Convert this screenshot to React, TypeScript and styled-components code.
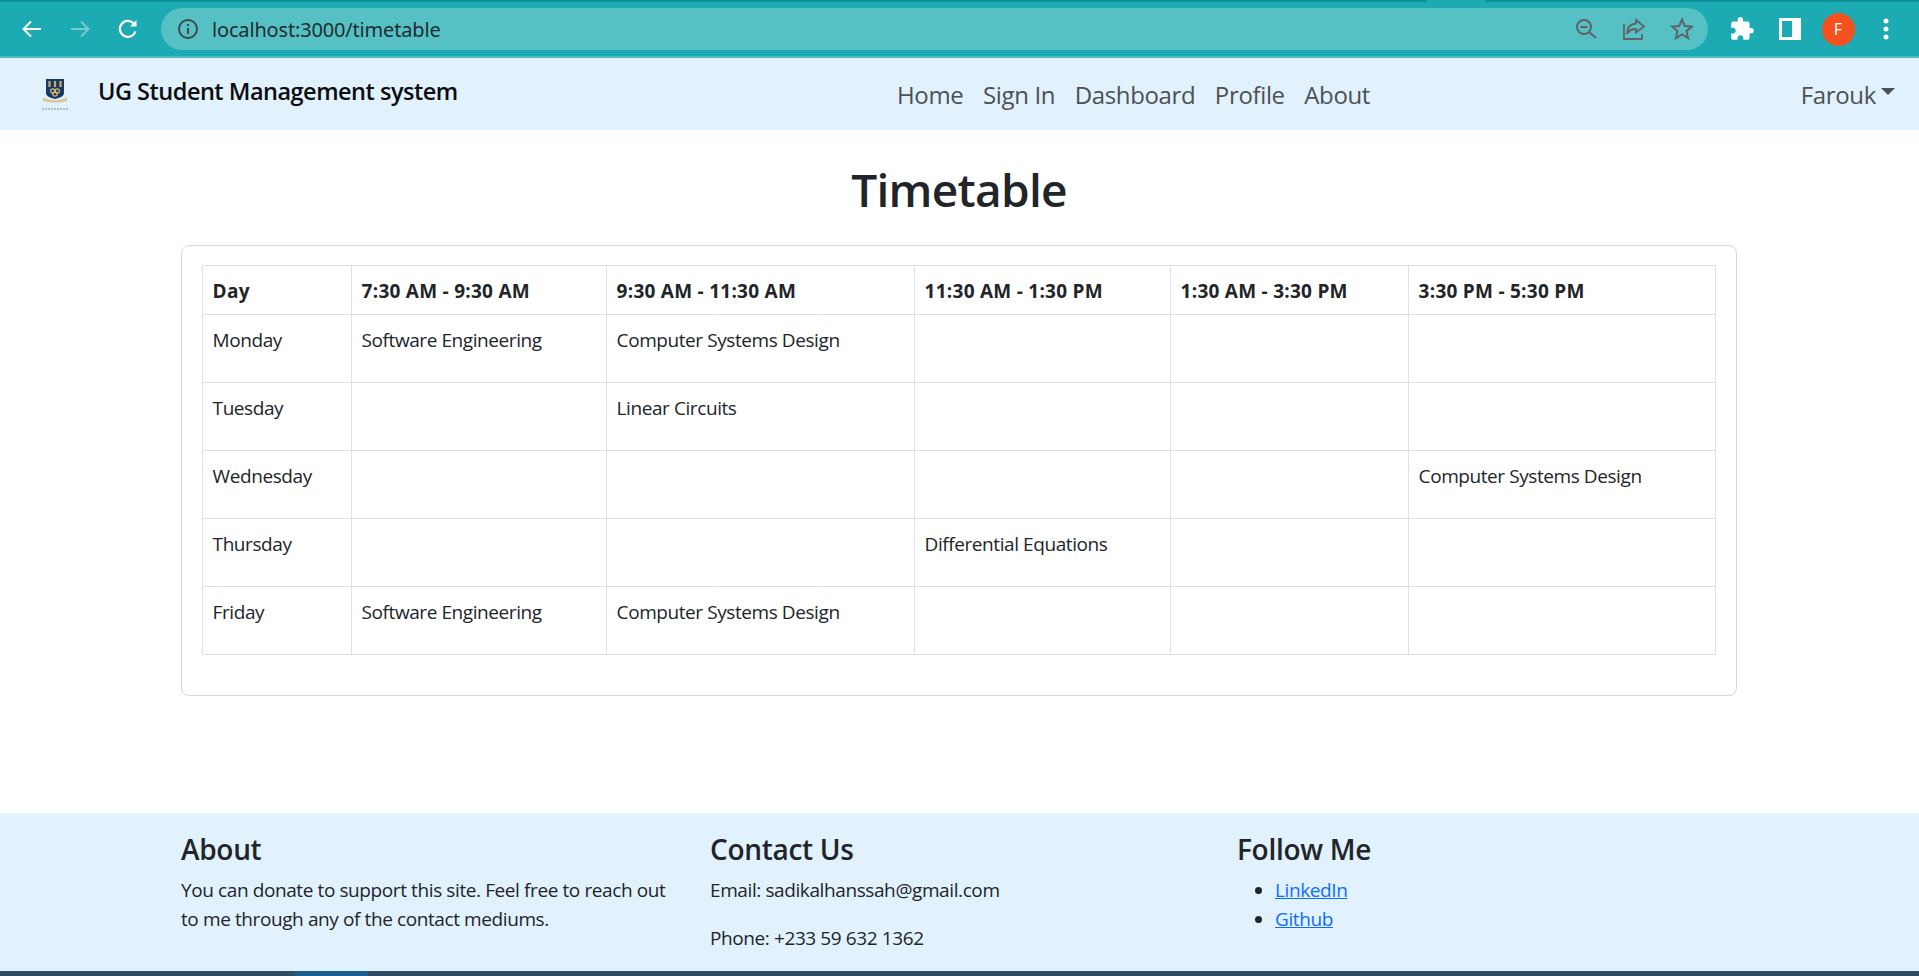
import React from "react";
import styled, { createGlobalStyle } from "styled-components";

const Global = createGlobalStyle`
  html, body { margin: 0; padding: 0; background: #fff; }
  body { font-family: "Open Sans", "Noto Sans", "Liberation Sans", sans-serif; color: #212529; overflow: hidden; }
  * { box-sizing: border-box; }
`;
const Page = styled.div`height: 976px; display: flex; flex-direction: column; overflow: hidden;`;
const Chrome = styled.div`
  position: relative; height: 58px; flex: none; background: #1cabb2; border-top: 2px solid #0b9097; border-bottom: 2px solid #4dbcc2;
  display: flex; align-items: center; padding: 0 0 0 16px;
`;
const TabNotch = styled.span`position: absolute; top: -2px; left: 1427px; width: 58px; height: 2px; background: #1cabb2;`;
const ChromeBtn = styled.button<{ $faded?: boolean }>`
  width: 32px; height: 32px; margin-right: 16px; padding: 0; border: 0; background: none;
  display: flex; align-items: center; justify-content: center; color: #fff; opacity: ${p => p.$faded ? 0.4 : 1};
`;
const Omnibox = styled.div`
  width: 1547px; height: 42px; margin-left: 1px; border-radius: 21px; background: #55c1c5;
  display: flex; align-items: center; padding: 0 2px 0 16px;
`;
const Url = styled.span`
  margin-left: 13px; font-family: "Noto Sans", sans-serif; font-size: 20px; color: #202d30; flex: 1; letter-spacing: -.17px;
`;
const OmniIcon = styled.span`width: 48px; display: flex; justify-content: center; color: #5f6368;`;
const Tools = styled.div`display: flex; align-items: center; margin-left: 10px;`;
const ToolSlot = styled.span`width: 48px; display: flex; justify-content: center; align-items: center; color: #fff;`;
const Avatar = styled.span`
  width: 33px; height: 33px; border-radius: 50%; background: #f5511e; color: #fff;
  display: flex; align-items: center; justify-content: center; font-size: 16px; font-family: "Noto Sans", sans-serif;
`;
const Nav = styled.nav`
  height: 72px; flex: none; background: #e1f1fd; display: grid; grid-template-columns: 856px auto 1fr;
  align-items: center; padding: 0 24px 0 41px;
`;
const Brand = styled.div`display: flex; align-items: center; gap: 29px;`;
const BrandName = styled.span`font-size: 23.5px; font-weight: 600; color: #0b0d0f; letter-spacing: -.5px; white-space: nowrap; margin-top: -6px;`;
const NavLinks = styled.div`display: flex; gap: 19.5px;`;
const NavLink = styled.a`font-size: 24px; color: #4d5154; letter-spacing: -.35px;`;
const User = styled.div`justify-self: end; display: flex; align-items: center; font-size: 24px; color: #4d5154; letter-spacing: -.35px;`;
const Caret = styled.span`
  width: 0; height: 0; margin-left: 5px; margin-bottom: 6px;
  border-left: 7px solid transparent; border-right: 7px solid transparent; border-top: 7px solid #4d5154;
`;
const Main = styled.main`flex: 1; padding: 0 182px 0 181px; min-height: 0;`;
const Title = styled.h1`
  margin: 26px 0 23px; height: 66px; line-height: 66px; text-align: center; font-size: 46px; font-weight: 600; letter-spacing: -.7px;
`;
const Card = styled.section`
  height: 451px; border: 1px solid #d5d8db; border-radius: 8px; padding: 19px 20px 0;
`;
const Table = styled.table`
  width: 100%; border-collapse: collapse; table-layout: fixed; font-size: 19px; letter-spacing: -.42px;
  th, td { border: 1px solid #dee2e6; padding: 12px 9.6px 0; text-align: left; vertical-align: top; }
  th { height: 49px; font-weight: 700; letter-spacing: .26px; }
  td { height: 68px; }
`;
const Footer = styled.footer`
  height: 158px; flex: none; background: #e1f1fd; padding: 20px 181px 0;
  display: grid; grid-template-columns: 529px 527px 1fr; font-size: 19px; letter-spacing: -.4px;
`;
const FootTitle = styled.h4`margin: 0 0 10px; font-size: 28px; line-height: 33px; font-weight: 600; letter-spacing: -.3px;`;
const FootText = styled.p`margin: 0 0 19px; line-height: 29px; width: 500px;`;
const FootList = styled.ul`margin: 0; padding-left: 38px; line-height: 29px;`;
const FootLink = styled.a`color: #0d6efd; text-decoration: underline;`;
const Taskbar = styled.div`height: 5px; flex: none; background: #2f4d63; display: flex;`;
const TaskActive = styled.span`width: 73px; margin-left: 295px; background: #1b5e93;`;

const Crest = () => (
  <svg width="28" height="33" viewBox="0 0 28 33" aria-hidden="true">
    <path d="M5 1h18v14c0 3-4 5-9 6-5-1-9-3-9-6z" fill="#17386b" />
    <path d="M8.500 3v6M14 3v6M19.500 3v6" stroke="#c9ad66" strokeWidth="2.2" />
    <circle cx="11.800" cy="13" r="2.200" fill="none" stroke="#dfb95f" strokeWidth="1.200" />
    <circle cx="16.200" cy="13" r="2.200" fill="none" stroke="#dfb95f" strokeWidth="1.200" />
    <circle cx="14" cy="16" r="2.200" fill="none" stroke="#dfb95f" strokeWidth="1.200" />
    <path d="M2 19c4 4 20 4 24 0v4c-6 2-18 2-24 0z" fill="#dcc592" />
    <path d="M1 31h26" stroke="#7b88a8" strokeWidth="1" strokeDasharray="2 1" />
  </svg>
);

const hours = ["Day", "7:30 AM - 9:30 AM", "9:30 AM - 11:30 AM", "11:30 AM - 1:30 PM", "1:30 AM - 3:30 PM", "3:30 PM - 5:30 PM"];
const rows = [
  ["Monday", "Software Engineering", "Computer Systems Design", "", "", ""],
  ["Tuesday", "", "Linear Circuits", "", "", ""],
  ["Wednesday", "", "", "", "", "Computer Systems Design"],
  ["Thursday", "", "", "Differential Equations", "", ""],
  ["Friday", "Software Engineering", "Computer Systems Design", "", "", ""],
];
const widths = [149, 255, 308, 256, 238, 307];

export default function App() {
  return (
    <Page>
      <Global />
      <Chrome>
        <TabNotch />
        <ChromeBtn aria-label="Back"><svg width="24" height="24" viewBox="0 0 24 24" fill="none" stroke="currentColor" strokeWidth="2"><path d="M21 12H4M11 4.500 3.500 12l7.500 7.500" /></svg></ChromeBtn>
        <ChromeBtn $faded aria-label="Forward"><svg width="24" height="24" viewBox="0 0 24 24" fill="none" stroke="currentColor" strokeWidth="2"><path d="M3 12h17M13 4.500l7.500 7.500-7.500 7.500" /></svg></ChromeBtn>
        <ChromeBtn aria-label="Reload"><svg width="24" height="24" viewBox="0 0 24 24" fill="none" stroke="currentColor" strokeWidth="2.2"><path d="M19.500 14.500A8 8 0 1 1 17.500 6.200L20 8.500" /><path d="M20.500 3v6.500H14" fill="currentColor" stroke="none" /></svg></ChromeBtn>
        <Omnibox>
          <svg width="22" height="22" viewBox="0 0 22 22" fill="none" stroke="#3f484b" strokeWidth="2"><circle cx="11" cy="11" r="9" /><path d="M11 10v6M11 6v2" /></svg>
          <Url>localhost:3000/timetable</Url>
          <OmniIcon><svg width="24" height="24" viewBox="0 0 24 24" fill="none" stroke="currentColor" strokeWidth="2"><circle cx="10" cy="10" r="7" /><path d="M15 15l7 6M6.500 10h7" /></svg></OmniIcon>
          <OmniIcon><svg width="24" height="24" viewBox="0 0 24 24" fill="none" stroke="currentColor" strokeWidth="1.800"><path d="M2 7v15h18v-5M14 3l8 6.500-8 6v-3.500c-4 0-7 1-9 5 0-6 3-10 9-10.500z" /></svg></OmniIcon>
          <OmniIcon><svg width="24" height="24" viewBox="0 0 24 24" fill="none" stroke="currentColor" strokeWidth="2"><path d="M12 2.500l2.800 6.500 7 .6-5.300 4.600 1.600 6.900-6.100-3.700-6.100 3.700 1.600-6.900L2.200 9.600l7-.6z" /></svg></OmniIcon>
        </Omnibox>
        <Tools>
          <ToolSlot><svg width="26" height="26" viewBox="0 0 24 24" fill="currentColor"><path d="M20.500 11H19V7c0-1.100-.9-2-2-2h-4V3.500C13 2.120 11.880 1 10.500 1S8 2.120 8 3.500V5H4c-1.100 0-1.990.9-1.990 2v3.800H3.500c1.490 0 2.700 1.210 2.700 2.700s-1.210 2.700-2.700 2.700H2V20c0 1.100.9 2 2 2h3.800v-1.500c0-1.490 1.210-2.700 2.700-2.700 1.490 0 2.700 1.210 2.700 2.700V22H17c1.100 0 2-.9 2-2v-4h1.500c1.380 0 2.500-1.120 2.500-2.500S21.880 11 20.500 11z" /></svg></ToolSlot>
          <ToolSlot><svg width="22" height="22" viewBox="0 0 22 22"><path d="M0 0h22v22H0zM3 3v16h10V3z" fill="currentColor" fillRule="evenodd" /></svg></ToolSlot>
          <ToolSlot><Avatar>F</Avatar></ToolSlot>
          <ToolSlot><svg width="6" height="24" viewBox="0 0 6 24" fill="currentColor"><circle cx="3" cy="4" r="2.500" /><circle cx="3" cy="12" r="2.500" /><circle cx="3" cy="20" r="2.500" /></svg></ToolSlot>
        </Tools>
      </Chrome>
      <Nav>
        <Brand><Crest /><BrandName>UG Student Management system</BrandName></Brand>
        <NavLinks>
          {["Home", "Sign In", "Dashboard", "Profile", "About"].map(l => <NavLink key={l}>{l}</NavLink>)}
        </NavLinks>
        <User>Farouk<Caret /></User>
      </Nav>
      <Main>
        <Title>Timetable</Title>
        <Card>
          <Table>
            <colgroup>{widths.map((w, i) => <col key={i} style={{ width: w }} />)}</colgroup>
            <thead><tr>{hours.map(h => <th key={h}>{h}</th>)}</tr></thead>
            <tbody>
              {rows.map(r => <tr key={r[0]}>{r.map((c, i) => <td key={i}>{c}</td>)}</tr>)}
            </tbody>
          </Table>
        </Card>
      </Main>
      <Footer>
        <div>
          <FootTitle>About</FootTitle>
          <FootText>You can donate to support this site. Feel free to reach out to me through any of the contact mediums.</FootText>
        </div>
        <div>
          <FootTitle>Contact Us</FootTitle>
          <FootText>Email: sadikalhanssah@gmail.com</FootText>
          <FootText>Phone: +233 59 632 1362</FootText>
        </div>
        <div>
          <FootTitle>Follow Me</FootTitle>
          <FootList>
            <li><FootLink>LinkedIn</FootLink></li>
            <li><FootLink>Github</FootLink></li>
          </FootList>
        </div>
      </Footer>
      <Taskbar><TaskActive /></Taskbar>
    </Page>
  );
}
